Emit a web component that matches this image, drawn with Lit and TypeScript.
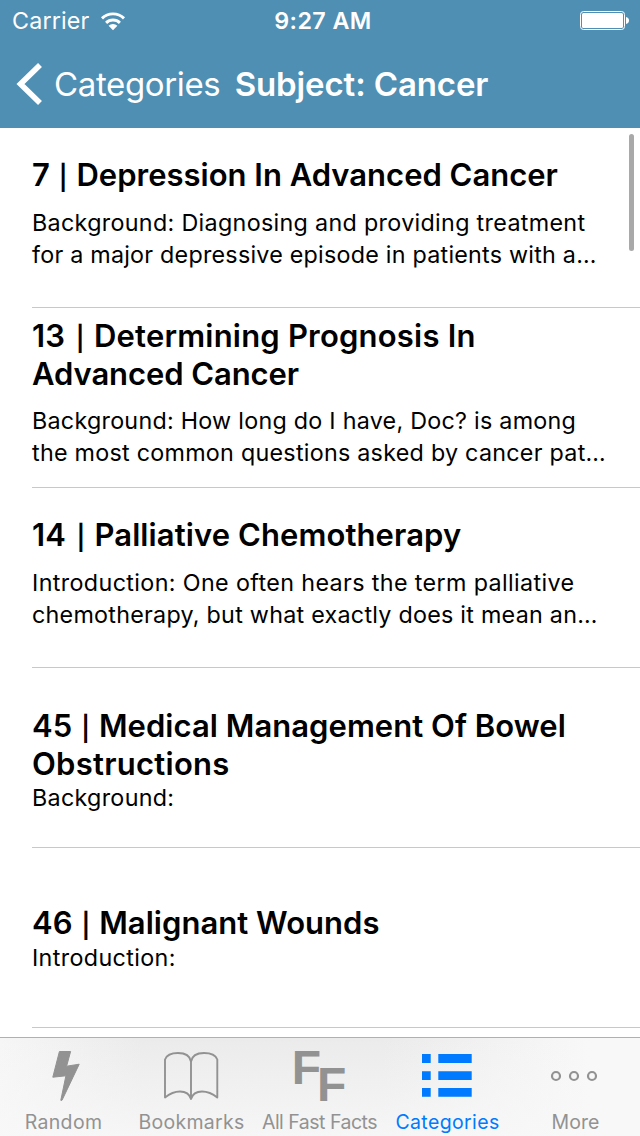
import { LitElement, html, css, svg } from "lit";
import { customElement } from "lit/decorators.js";
import { classMap } from "lit/directives/class-map.js";

interface Line {
  text: string;
  tracking: number;
}

interface Fact {
  top: number;
  gap: number;
  number: string;
  title: Line[];
  summary: Line[];
}

const line = (text: string, tracking = 0): Line => ({ text, tracking });

const FACTS: Fact[] = [
  {
    top: 28,
    gap: 13,
    number: "7",
    title: [line("Depression In Advanced Cancer")],
    summary: [
      line("Background: Diagnosing and providing treatment", 0.32),
      line("for a major depressive episode in patients with a…", 0.235),
    ],
  },
  {
    top: 9,
    gap: 12,
    number: "13",
    title: [line("Determining Prognosis In", 0.2), line("Advanced Cancer", -0.08)],
    summary: [
      line("Background: How long do I have, Doc? is among", 0.26),
      line("the most common questions asked by cancer pat…", 0.26),
    ],
  },
  {
    top: 28,
    gap: 13,
    number: "14",
    title: [line("Palliative Chemotherapy", 0.1)],
    summary: [
      line("Introduction: One often hears the term palliative", 0.37),
      line("chemotherapy, but what exactly does it mean an…", 0.255),
    ],
  },
  {
    top: 39,
    gap: -1,
    number: "45",
    title: [line("Medical Management Of Bowel", 0.04), line("Obstructions", 0.26)],
    summary: [line("Background:", 0.3)],
  },
  {
    top: 56,
    gap: 0,
    number: "46",
    title: [line("Malignant Wounds", 0.03)],
    summary: [line("Introduction:", 0.36)],
  },
];

const bolt = svg`<path fill="currentColor" stroke="currentColor" stroke-width="1" stroke-linejoin="round"
  d="M59.4 13.5H70.6L66.6 28.2L79.2 26.2L62 62.3H60.8L65.9 37.8L52.8 39.2Z"/>`;

const book = svg`<path fill="none" stroke="currentColor" stroke-width="1.9" stroke-linejoin="round"
  d="M37 59.5V21.5C38.5 17.5 43 15 50 15C57 15 62 18 63 23.5C64 18 69 15 76 15C83 15 87.8 17.5 89.3 21.5V59.5C85 56 79 53.5 74 53.5C68 53.5 64.5 56 63 61C61.5 56 58 53.5 52 53.5C47 53.5 41.3 56 37 59.5ZM63 23.5V61"/>`;

const doubleF = svg`<g class="mark"><text x="35.8" y="46.3">F</text><text x="61.1" y="62.7">F</text></g>`;

const list = svg`<path fill="currentColor"
  d="M38 16h8.7v9H38zM54.3 16h33.4v9H54.3zM38 33.2h8.7v8.8H38zM54.3 33.2h33.4v8.8H54.3zM38 50h8.7v8.8H38zM54.3 50h33.4v8.8H54.3z"/>`;

const dots = svg`<g fill="none" stroke="currentColor" stroke-width="2.2">
  <circle cx="44" cy="38" r="4"/><circle cx="62" cy="38" r="4"/><circle cx="80" cy="38" r="4"/></g>`;

const TABS = [
  { label: "Random", icon: bolt, tracking: 0.35 },
  { label: "Bookmarks", icon: book, tracking: 0.28 },
  { label: "All Fast Facts", icon: doubleF, tracking: -0.5 },
  { label: "Categories", icon: list, tracking: 0.38, active: true },
  { label: "More", icon: dots, tracking: 0.1 },
];

@customElement("status-bar")
class StatusBar extends LitElement {
  static styles = css`
    :host {
      display: grid;
      grid-template-columns: 1fr auto 1fr;
      align-items: center;
      height: 40px;
      padding: 0 11px 0 12px;
      font-size: 23.3px;
      line-height: 41px;
    }
    .left {
      display: flex;
      align-items: center;
      letter-spacing: 0.15px;
    }
    .wifi {
      margin-left: 10.5px;
    }
    .time {
      margin-left: 5px;
      font-weight: 600;
      letter-spacing: 0.4px;
    }
    .battery {
      justify-self: end;
    }
    svg {
      display: block;
    }
  `;
  render() {
    return html`
      <div class="left">
        <span>Carrier</span>
        <svg class="wifi" width="26" height="20" viewBox="0 0 26 20">
          <g fill="none" stroke="#fff" stroke-width="2.9">
            <path d="M2 7.4A15.6 15.6 0 0 1 24 7.4" />
            <path d="M6.1 11.9A9.8 9.8 0 0 1 19.9 11.9" />
          </g>
          <path fill="#fff" d="M13 19.2L8.6 14.7A6.3 6.3 0 0 1 17.4 14.7Z" />
        </svg>
      </div>
      <span class="time">9:27 AM</span>
      <svg class="battery" width="49" height="19" viewBox="0 0 49 19">
        <rect x="0.5" y="0.5" width="44" height="18" rx="3" fill="none" stroke="#fff" />
        <rect x="2" y="2" width="41" height="15" rx="1.5" fill="#fff" />
        <path fill="#fff" d="M46 6C48 6.3 49 7.6 49 9.5S48 12.7 46 13Z" />
      </svg>
    `;
  }
}

@customElement("nav-bar")
class NavBar extends LitElement {
  static styles = css`
    :host {
      display: flex;
      align-items: center;
      height: 88px;
      padding-left: 16px;
      font-size: 33px;
      line-height: 40px;
      white-space: nowrap;
    }
    .back {
      display: flex;
      align-items: center;
      width: 218.7px;
      font-weight: 400;
      letter-spacing: -0.36px;
    }
    .back svg {
      margin-right: 10px;
    }
    .title {
      font-weight: 600;
      letter-spacing: -0.12px;
    }
  `;
  render() {
    return html`
      <div class="back">
        <svg width="28" height="44" viewBox="0 0 28 44">
          <path d="M24 3L4.5 22L24 41" fill="none" stroke="#fff" stroke-width="5.6" />
        </svg>
        <span>Categories</span>
      </div>
      <span class="title">Subject: Cancer</span>
    `;
  }
}

@customElement("fact-list")
class FactList extends LitElement {
  static styles = css`
    :host {
      display: block;
      position: relative;
      overflow: hidden;
      background: #fff;
      color: #000;
    }
    .row {
      box-sizing: border-box;
      height: 180px;
      margin-left: 32px;
      border-bottom: 1px solid #c8c7cc;
      white-space: nowrap;
    }
    .title {
      font-size: 31px;
      font-weight: 600;
      line-height: 38px;
    }
    .bar {
      margin: 0 1.1px;
      font-size: 24.5px;
      line-height: 1;
    }
    .wide {
      margin-left: 2.6px;
    }
    .summary {
      font-size: 23.3px;
      line-height: 32px;
    }
    .scroll {
      position: absolute;
      top: 6px;
      right: 6px;
      width: 5px;
      height: 117px;
      border-radius: 2.5px;
      background: #a9a9a9;
    }
  `;
  private lines(lines: Line[], number = "") {
    return lines.map((l, i) => {
      const bar = classMap({ bar: true, wide: number.startsWith("1") });
      const prefix = number && i === 0 ? html`${number} <span class=${bar}>|</span> ` : "";
      return html`<div style="letter-spacing:${l.tracking}px">${prefix}${l.text}</div>`;
    });
  }
  render() {
    return html`
      ${FACTS.map(
        (f) => html`
          <div class="row" style="padding-top:${f.top}px">
            <div class="title">${this.lines(f.title, f.number)}</div>
            <div class="summary" style="margin-top:${f.gap}px">${this.lines(f.summary)}</div>
          </div>
        `,
      )}
      <div class="scroll"></div>
    `;
  }
}

@customElement("tab-bar")
class TabBar extends LitElement {
  static styles = css`
    :host {
      display: grid;
      grid-template-columns: repeat(5, 1fr);
      box-sizing: border-box;
      height: 99px;
      border-top: 1px solid #b0b0b1;
      background:
        linear-gradient(to bottom, rgba(248, 248, 248, 0), rgba(248, 248, 248, 0.85)),
        linear-gradient(to right, #f6f6f6, #ebebeb 22%, #ebebeb 60%, #f8f8f8 92%);
      color: #929292;
    }
    .tab {
      display: flex;
      flex-direction: column;
      align-items: center;
      gap: 8px;
      font-size: 19.5px;
      line-height: 24px;
      white-space: nowrap;
    }
    .active {
      color: #007aff;
    }
    .label {
      margin-right: 1px;
    }
    svg {
      display: block;
      width: 128px;
      height: 64px;
      overflow: visible;
    }
    .mark {
      font: bold 48px "Liberation Sans", Arial, sans-serif;
      fill: currentColor;
    }
  `;
  render() {
    return TABS.map(
      (t) => html`
        <div class=${classMap({ tab: true, active: !!t.active })}>
          <svg viewBox="0 0 128 64">${t.icon}</svg>
          <span class="label" style="letter-spacing:${t.tracking}px">${t.label}</span>
        </div>
      `,
    );
  }
}

@customElement("app-root")
class AppRoot extends LitElement {
  static styles = css`
    :host {
      display: flex;
      flex-direction: column;
      width: 640px;
      height: 1136px;
      overflow: hidden;
      background: #fff;
      font-family: Inter, "Liberation Sans", sans-serif;
    }
    header {
      background: #4f8fb3;
      color: #fff;
    }
    fact-list {
      flex: 1;
    }
  `;
  render() {
    return html`
      <header>
        <status-bar></status-bar>
        <nav-bar></nav-bar>
      </header>
      <fact-list></fact-list>
      <tab-bar></tab-bar>
    `;
  }
}
